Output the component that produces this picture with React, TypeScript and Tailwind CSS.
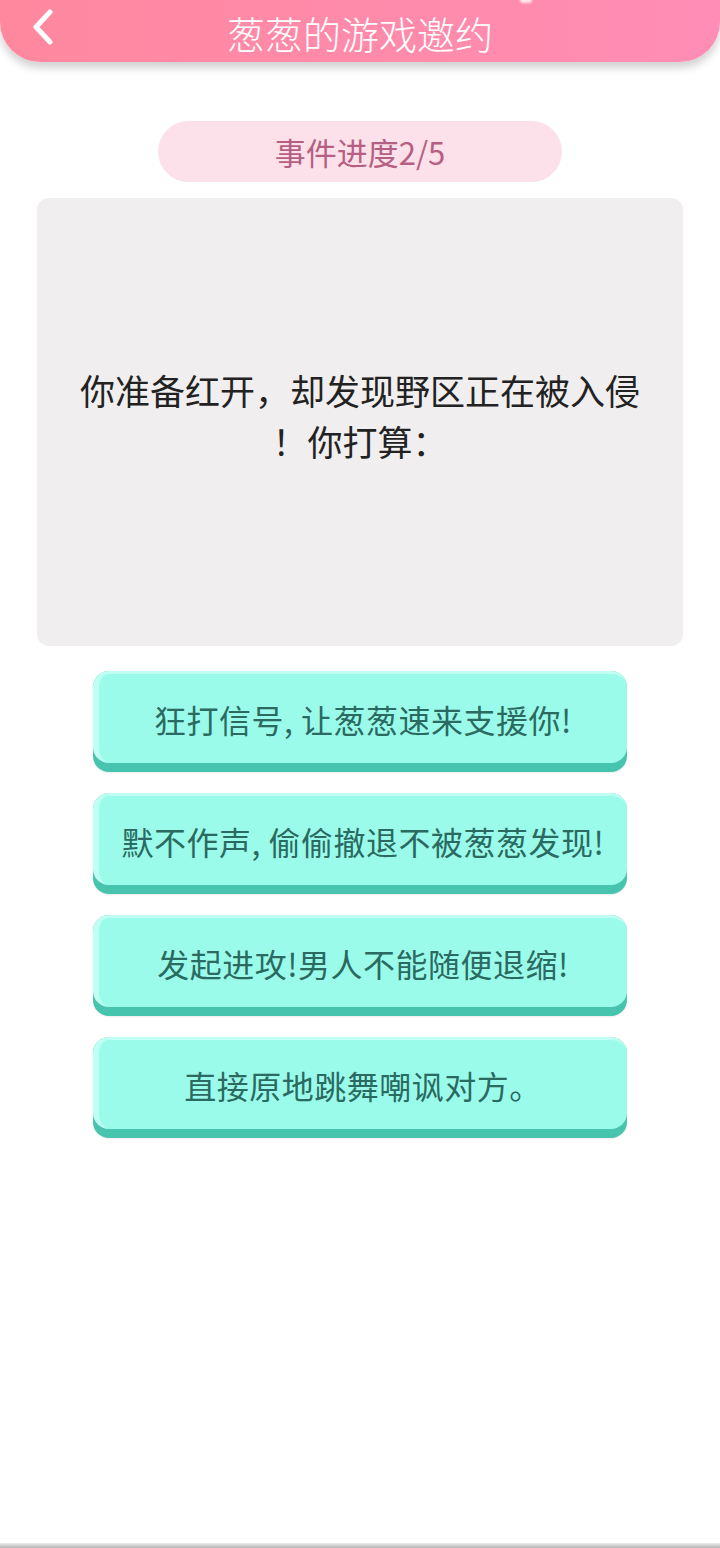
import React from "react";

const options = [
  "狂打信号, 让葱葱速来支援你!",
  "默不作声, 偷偷撤退不被葱葱发现!",
  "发起进攻!男人不能随便退缩!",
  "直接原地跳舞嘲讽对方。",
];

export default function App() {
  return (
    <div
      className="relative w-[720px] h-[1548px] bg-white overflow-hidden flex flex-col"
      style={{ fontFamily: '"Noto Sans CJK SC", "Noto Sans", sans-serif' }}
    >
      {/* Header */}
      <div className="relative h-[62px] w-full rounded-b-[40px] bg-gradient-to-r from-[#ff889f] to-[#ff8db5] shadow-[0_6px_8px_rgba(0,0,0,0.18)] flex items-center justify-center shrink-0">
        <div className="absolute left-[520px] top-[-3px] w-[12px] h-[6px] rounded-full bg-white/80 blur-[1px]" />
        <button className="absolute left-[30px] top-[9px] w-[26px] h-[36px] flex items-center justify-center">
          <svg width="24" height="36" viewBox="0 0 24 36" fill="none">
            <path
              d="M19 3 L5 18 L19 33"
              stroke="white"
              strokeWidth="5"
              strokeLinecap="round"
              strokeLinejoin="round"
            />
          </svg>
        </button>
        <div className="text-white text-[38px] leading-none font-light mt-[4px]">
          葱葱的游戏邀约
        </div>
      </div>

      {/* Progress pill */}
      <div className="flex justify-center mt-[59px]">
        <div className="w-[404px] h-[61px] rounded-full bg-[#fde1ea] flex items-center justify-center text-[#b75f83] text-[31px] leading-none">
          事件进度2/5
        </div>
      </div>

      {/* Question card */}
      <div className="mx-[37px] mt-[16px] h-[448px] rounded-[12px] bg-[#f0eeef] flex items-center justify-center px-[30px] pb-[14px]">
        <p className="text-center text-[#222222] text-[35px] leading-[51px]">
          <span className="block">你准备红开，却发现野区正在被入侵</span>
          <span className="block">！你打算：</span>
        </p>
      </div>

      {/* Options */}
      <div className="flex flex-col items-center gap-[21px] mt-[25px]">
        {options.map((t) => (
          <button
            key={t}
            className="relative w-[534px] h-[101px] rounded-[16px] bg-[#47c4ae] shadow-[0_1px_2px_rgba(0,0,0,0.08)]"
          >
            <div className="absolute left-0 right-0 top-0 h-[92px] rounded-[16px] bg-[#9bfbea] border-t-[3px] border-l-[6px] border-[#bffff4] flex items-center justify-center">
              <span className="text-[#2a6a61] text-[32px] leading-none tracking-[0.5px]">
                {t}
              </span>
            </div>
          </button>
        ))}
      </div>

      <div className="flex-1" />
      <div className="h-[5px] w-full bg-gradient-to-b from-[#eeeeee] to-[#b5b5b5] shrink-0" />
    </div>
  );
}
